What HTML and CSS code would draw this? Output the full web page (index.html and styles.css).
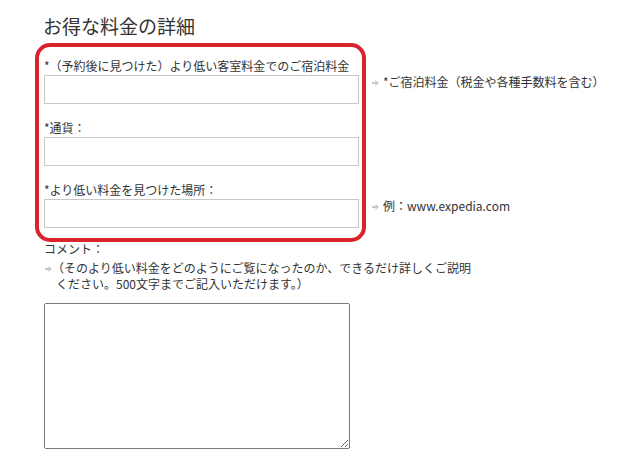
FILE: index.html
```html
<!DOCTYPE html>
<html lang="ja">
<head>
<meta charset="utf-8">
<title>お得な料金の詳細</title>
<link rel="stylesheet" href="styles.css">
</head>
<body>
<div class="page">
  <h2 class="title">お得な料金の詳細</h2>
  <div class="fields">
    <div class="annot" aria-hidden="true"></div>
    <div class="field">
      <label class="label" for="f1">*（予約後に見つけた）より低い客室料金でのご宿泊料金</label>
      <div class="row">
        <input class="text-input" id="f1" type="text">
        <span class="hint"><svg class="arrow" width="7" height="6" viewBox="0 0 7 6"><path d="M0 2h3.5V0L7 3 3.5 6V4H0z" fill="#c8c8c8"/></svg>*ご宿泊料金（税金や各種手数料を含む）</span>
      </div>
    </div>
    <div class="field">
      <label class="label" for="f2">*通貨：</label>
      <div class="row">
        <input class="text-input" id="f2" type="text">
      </div>
    </div>
    <div class="field">
      <label class="label" for="f3">*より低い料金を見つけた場所：</label>
      <div class="row">
        <input class="text-input" id="f3" type="text">
        <span class="hint"><svg class="arrow" width="7" height="6" viewBox="0 0 7 6"><path d="M0 2h3.5V0L7 3 3.5 6V4H0z" fill="#c8c8c8"/></svg>例：www.expedia.com</span>
      </div>
    </div>
  </div>
  <div class="comment">
    <label class="label" for="c1">コメント：</label>
    <p class="comment-hint"><svg class="arrow" width="7" height="6" viewBox="0 0 7 6"><path d="M0 2h3.5V0L7 3 3.5 6V4H0z" fill="#c8c8c8"/></svg>（そのより低い料金をどのようにご覧になったのか、できるだけ詳しくご説明ください。500文字までご記入いただけます。）</p>
    <textarea class="comment-box" id="c1"></textarea>
  </div>
</div>
</body>
</html>
```

FILE: styles.css
```css
html, body {
  margin: 0;
  padding: 0;
  background: #ffffff;
}

body {
  font-family: "Noto Sans CJK JP", "Noto Sans", sans-serif;
  color: #333333;
  font-size: 12px;
  line-height: 16px;
}

.page {
  padding: 12px 0 0 44px;
}

.title {
  margin: 0 0 18px -1px;
  font-size: 19px;
  line-height: 28px;
  font-weight: normal;
  color: #333333;
}

.fields {
  position: relative;
  display: flex;
  flex-direction: column;
  gap: 16px;
}

.annot {
  position: absolute;
  left: -9px;
  top: -15px;
  width: 331px;
  height: 199px;
  box-sizing: border-box;
  border: 4px solid #d9232d;
  border-radius: 15px;
  pointer-events: none;
}

.field {
  display: flex;
  flex-direction: column;
  gap: 1px;
}

.label {
  display: block;
  font-size: 12px;
  line-height: 16px;
  color: #333333;
}

.row {
  display: flex;
  align-items: flex-start;
}

.text-input {
  width: 315px;
  height: 29px;
  box-sizing: border-box;
  margin: 0;
  border: 1px solid #c8c8c8;
  border-radius: 0;
  padding: 2px 4px;
  font: inherit;
  background: #ffffff;
  flex: none;
}

.hint {
  margin-left: 13px;
  margin-top: -1px;
  white-space: nowrap;
  font-size: 12px;
  line-height: 16px;
  color: #333333;
}

.arrow {
  display: inline-block;
  vertical-align: 1px;
  margin-right: 4px;
}

.comment {
  margin-top: 13px;
}

.comment-hint {
  margin: 3px 0 0 0;
  width: 422px;
  padding-left: 12px;
  text-indent: -11px;
  font-size: 12px;
  line-height: 16px;
  color: #333333;
}

.comment-hint .arrow {
  margin-right: 0;
}

.comment-box {
  display: block;
  margin-top: 11px;
  width: 306px;
  height: 146px;
  box-sizing: border-box;
  border: 1px solid #7a7a7a;
  border-radius: 2px;
  padding: 2px;
  font: inherit;
  background: #ffffff;
}
```
